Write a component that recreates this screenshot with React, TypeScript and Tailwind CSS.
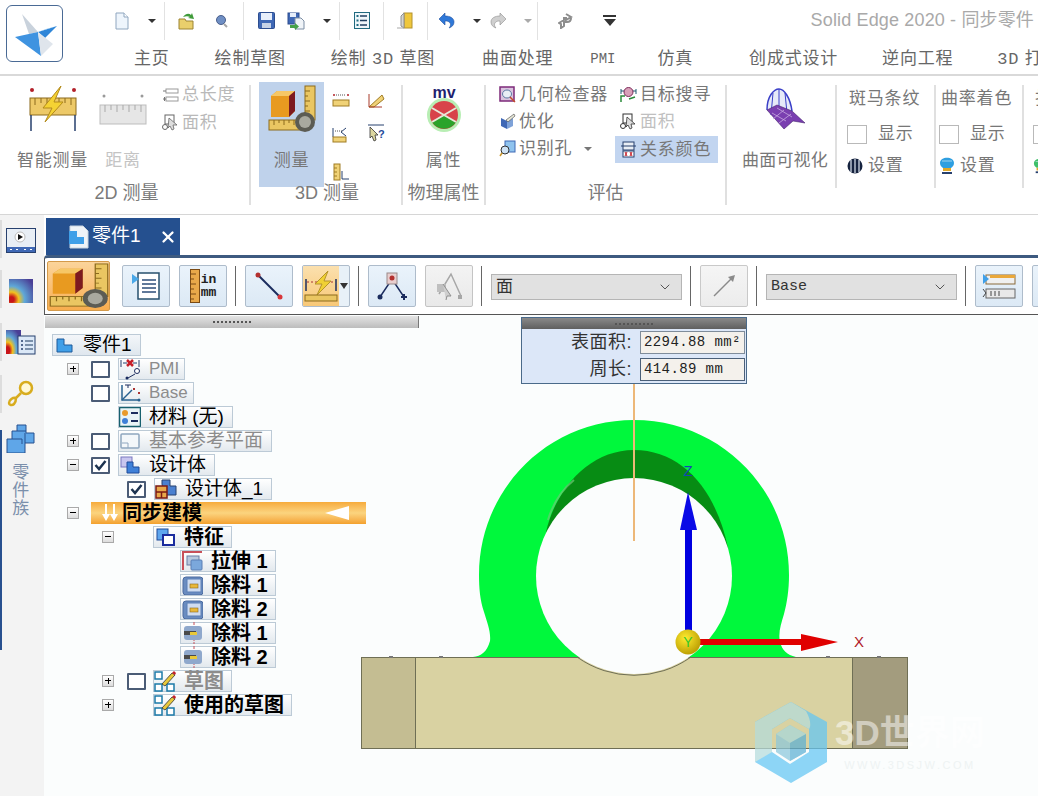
import { ChevronDown, X as Close } from 'lucide-react';
import type { ReactNode } from 'react';

const cjk = "font-['Liberation_Sans','Noto_Sans_CJK_SC',sans-serif]";
const mono = "font-['Liberation_Mono','Noto_Sans_CJK_SC',monospace]";

function Logo() {
  return (
    <div className="ml-[6px] mt-[5px] flex h-[57px] w-[57px] shrink-0 items-center justify-center rounded-[6px] border border-[#4a6a95] bg-white">
      <svg width="44" height="44" viewBox="0 0 44 44">
        <polygon points="9,2 25,20 16,22" fill="#c9d2dc" />
        <polygon points="25,20 44,14 32,26" fill="#2f86d8" />
        <polygon points="25,20 44,14 33,17" fill="#8fc3ee" />
        <polygon points="2,25 25,20 28,44" fill="#3f93e0" />
        <polygon points="25,20 40,32 28,44" fill="#dfe5ec" />
      </svg>
    </div>
  );
}

function Drop({ className = '' }: { className?: string }) {
  return <span className={`h-0 w-0 border-x-[4px] border-t-[4px] border-x-transparent border-t-[#333] ${className}`} />;
}

function QSep({ className = '' }: { className?: string }) {
  return <span className={`h-[38px] w-px bg-[#e2e2e2] ${className}`} />;
}

function QatDoc() {
  return (
    <svg width="14" height="18" viewBox="0 0 14 18">
      <path d="M1 1h8l4 4v12H1z" fill="#eef5fc" stroke="#8fa6bf" />
      <path d="M9 1v4h4" fill="#fff" stroke="#8fa6bf" />
    </svg>
  );
}
function QatOpen() {
  return (
    <svg width="19" height="18" viewBox="0 0 19 18">
      <path d="M1 7h6l1 2h7v8H1z" fill="#e9cf6c" stroke="#9c8433" />
      <path d="M5 5c3-4 6-4 8-2l1-2 2 6-6-1 2-1c-2-1-4-1-7 0z" fill="#3f9b3a" />
    </svg>
  );
}
function QatFind() {
  return (
    <svg width="14" height="14" viewBox="0 0 14 14">
      <circle cx="6" cy="6" r="4.5" fill="#6f8fc4" stroke="#4a5f8c" />
      <path d="M9 10l3 3" stroke="#a7a7a7" strokeWidth="2" />
    </svg>
  );
}
function QatSave() {
  return (
    <svg width="17" height="17" viewBox="0 0 17 17">
      <rect x="0.5" y="0.5" width="16" height="16" rx="1" fill="#3f68b5" stroke="#2c4d8f" />
      <rect x="3" y="1" width="11" height="7" fill="#e7eefa" />
      <rect x="4" y="11" width="9" height="5" fill="#c6d2e6" />
    </svg>
  );
}
function QatSaveAll() {
  return (
    <svg width="18" height="18" viewBox="0 0 18 18">
      <rect x="1" y="1" width="11" height="11" fill="#3f68b5" stroke="#2c4d8f" />
      <rect x="3" y="1" width="6" height="4" fill="#e7eefa" />
      <path d="M8 6h6l3 3v8H8z" fill="#f0f4f8" stroke="#7d8ea4" />
      <path d="M3 13h5v-2l4 3.500-4 3.500v-2H3z" fill="#46a14a" />
    </svg>
  );
}
function QatList() {
  return (
    <svg width="16" height="17" viewBox="0 0 16 17">
      <rect x="0.5" y="0.5" width="15" height="16" fill="#eef6fa" stroke="#1f6a80" />
      <path d="M6 4h7M6 8.500h7M6 13h7" stroke="#1f3f60" strokeWidth="1.500" />
      <path d="M2.500 4h2M2.500 8.500h2M2.500 13h2" stroke="#1f6a80" strokeWidth="2" />
    </svg>
  );
}
function QatDoor() {
  return (
    <svg width="16" height="17" viewBox="0 0 16 17">
      <rect x="7" y="1" width="8" height="15" fill="#efc73c" stroke="#b3922c" />
      <path d="M7 1L4 4v10l3 2z" fill="#d5d5d0" stroke="#8f8f8f" />
      <path d="M0 16h7" stroke="#a9a9a9" />
    </svg>
  );
}
function QatUndo({ color, stroke }: { color: string; stroke: string }) {
  return (
    <svg width="17" height="17" viewBox="0 0 17 17">
      <path d="M1 7l6-6v3c5 0 9 2 9 6 0 3-2 5-5 6 2-2 2-5 0-6-1-1-2-1-4-1v4z" fill={color} stroke={stroke} strokeWidth="0.600" />
    </svg>
  );
}
function QatSwap() {
  return (
    <svg width="15" height="16" viewBox="0 0 15 16">
      <path d="M8 1l5 3-5 3V5H6v2L1 10l2 1v4l3-2V9h3c3 0 4-2 4-4" fill="none" stroke="#8d8d8d" strokeWidth="2" />
    </svg>
  );
}

function QuickBar() {
  return (
    <div className="flex h-[41px] items-center">
      <span className="ml-[50px] flex w-[18px] justify-center"><QatDoc /></span>
      <Drop className="ml-[17px]" />
      <QSep className="ml-[8px]" />
      <span className="ml-[12px] flex w-[20px] justify-center"><QatOpen /></span>
      <span className="ml-[18px] flex w-[14px] justify-center"><QatFind /></span>
      <QSep className="ml-[14px]" />
      <span className="ml-[14px]"><QatSave /></span>
      <span className="ml-[12px]"><QatSaveAll /></span>
      <Drop className="ml-[18px]" />
      <QSep className="ml-[8px]" />
      <span className="ml-[14px]"><QatList /></span>
      <QSep className="ml-[13px]" />
      <span className="ml-[13px]"><QatDoor /></span>
      <QSep className="ml-[14px]" />
      <span className="ml-[10px]"><QatUndo color="#2f78d8" stroke="#1e4f9e" /></span>
      <Drop className="ml-[18px]" />
      <span className="ml-[9px] -scale-x-100"><QatUndo color="#cfcfcf" stroke="#8d8d8d" /></span>
      <Drop className="ml-[17px] border-t-[#aaa]" />
      <QSep className="ml-[5px]" />
      <span className="ml-[20px]"><QatSwap /></span>
      <span className="ml-[30px] flex flex-col items-center gap-[2px]">
        <span className="h-[2px] w-[13px] bg-[#333]" />
        <Drop className="border-x-[6px] border-t-[7px]" />
      </span>
      <span className={`ml-auto mr-[4px] text-[18px] tracking-[0.15px] text-[#a9a9a9] ${cjk}`}>Solid Edge 2020 - 同步零件</span>
    </div>
  );
}

function TabBar() {
  return (
    <div className={`flex h-[34px] items-center whitespace-nowrap pt-[2px] text-[17px] tracking-[0.8px] text-[#666] ${cjk}`}>
      <span className="ml-[71px]">主页</span>
      <span className="ml-[45px]">绘制草图</span>
      <span className="ml-[45px]">绘制 <span className={mono}>3D</span> 草图</span>
      <span className="ml-[47px]">曲面处理</span>
      <span className={`ml-[37px] w-[28px] text-[14px] tracking-normal ${mono}`}>PMI</span>
      <span className="ml-[42px]">仿真</span>
      <span className="ml-[56px]">创成式设计</span>
      <span className="ml-[44px]">逆向工程</span>
      <span className="ml-[44px]"><span className={mono}>3D</span> 打印</span>
    </div>
  );
}

function SmartMeasure() {
  return (
    <svg width="48" height="48" viewBox="0 0 48 48">
      <circle cx="3" cy="5" r="2" fill="#b3202a" />
      <circle cx="45" cy="5" r="2" fill="#b3202a" />
      <rect x="1" y="13" width="46" height="17" fill="#edc968" stroke="#8c6a1d" />
      <path d="M6 13v7M12 13v5M18 13v7M24 13v5M30 13v7M36 13v5M42 13v7" stroke="#8c6a1d" />
      <path d="M2 30v16M46 30v16" stroke="#27406e" strokeWidth="1.500" />
      <path d="M32 1L14 23h9l-7 14 18-20h-9z" fill="#f5d233" stroke="#b38a1a" />
    </svg>
  );
}
function GrayRuler() {
  return (
    <svg width="48" height="32" viewBox="0 0 48 32">
      <circle cx="5" cy="3" r="1.500" fill="#9a9a9a" />
      <circle cx="43" cy="3" r="1.500" fill="#9a9a9a" />
      <rect x="1" y="12" width="46" height="19" fill="#e6e6e6" stroke="#bdbdbd" />
      <path d="M6 12v7M12 12v5M18 12v7M24 12v5M30 12v7M36 12v5M42 12v7" stroke="#a9a9a9" />
    </svg>
  );
}
function MeasureSvgBody() {
  return (
    <>
      <rect x="37" y="1" width="10" height="34" fill="#eac662" stroke="#8c6a1d" />
      <path d="M37 6h5M37 11h3M37 16h5M37 21h3M37 26h5" stroke="#8c6a1d" />
      <rect x="1" y="35" width="38" height="10" fill="#eac662" stroke="#8c6a1d" />
      <path d="M6 35v5M11 35v3M16 35v5M21 35v3M26 35v5" stroke="#8c6a1d" />
      <polygon points="3,11 9,6 27,6 27,26 21,32 3,32" fill="#e89a20" />
      <polygon points="3,11 9,6 27,6 21,11" fill="#f6c766" />
      <polygon points="21,11 27,6 27,26 21,32" fill="#7d1a20" />
      <circle cx="37" cy="37" r="10" fill="#5c5c54" />
      <circle cx="37" cy="37" r="6" fill="#a9a99f" />
    </>
  );
}
function TinyLen({ gray = false }: { gray?: boolean }) {
  const c = gray ? '#9a9a9a' : '#c9a33c';
  return (
    <svg width="17" height="14" viewBox="0 0 17 14">
      <rect x="4" y="1" width="12" height="4" fill="none" stroke={c} />
      <rect x="4" y="9" width="12" height="4" fill="none" stroke={c} />
      <path d="M1 3h3M1 11h3M2.500 9v4" stroke="#777" />
    </svg>
  );
}
function AreaCursor({ gray = false }: { gray?: boolean }) {
  const c = gray ? '#666' : '#333';
  return (
    <svg width="17" height="17" viewBox="0 0 17 17">
      <circle cx="3" cy="13" r="2.500" fill="#fff" stroke={c} />
      <rect x="3" y="1" width="9" height="9" fill="#fff" stroke={c} />
      <path d="M7 4l8 7-4 0 1 4-2 1-2-4-2 2z" fill="#ddd" stroke={c} strokeWidth="0.800" />
    </svg>
  );
}
function MiniRuler({ kind }: { kind: number }) {
  if (kind === 0)
    return (
      <svg width="18" height="16" viewBox="0 0 18 16">
        <circle cx="2" cy="3" r="1" fill="#b3202a" /><circle cx="16" cy="3" r="1" fill="#b3202a" />
        <path d="M4 3h10" stroke="#555" strokeDasharray="1 1" />
        <rect x="1" y="8" width="16" height="6" fill="#f0d277" stroke="#a07c25" />
      </svg>
    );
  if (kind === 1)
    return (
      <svg width="18" height="18" viewBox="0 0 18 18">
        <path d="M2 16L15 4 17 8 7 16z" fill="#f0d277" stroke="#a07c25" />
        <path d="M2 3v13h13" fill="none" stroke="#a83a2a" />
      </svg>
    );
  if (kind === 2)
    return (
      <svg width="18" height="18" viewBox="0 0 18 18">
        <path d="M1 3v9M14 3L9 7l5 4" fill="none" stroke="#27406e" />
        <path d="M3 6h7" stroke="#555" strokeDasharray="1 1" />
        <rect x="1" y="12" width="13" height="5" fill="#f0d277" stroke="#a07c25" />
      </svg>
    );
  if (kind === 3)
    return (
      <svg width="18" height="18" viewBox="0 0 18 18">
        <path d="M1 1h16" stroke="#27406e" />
        <path d="M3 3l8 8-3 0 1 5-2 1-2-5-2 2z" fill="#ddd7a0" stroke="#333" strokeWidth="0.800" />
        <text x="11" y="14" fontSize="11" fontWeight="700" fill="#1f4a9a" fontFamily="Liberation Sans">?</text>
      </svg>
    );
  return (
    <svg width="18" height="18" viewBox="0 0 18 18">
      <rect x="2" y="1" width="6" height="16" fill="#f0d277" stroke="#a07c25" />
      <path d="M2 5h3M2 9h3M2 13h3" stroke="#a07c25" />
      <path d="M10 8v8h7" fill="none" stroke="#27406e" />
    </svg>
  );
}
function MvIcon() {
  return (
    <svg width="36" height="46" viewBox="0 0 36 46">
      <text x="18" y="12" textAnchor="middle" fontSize="16" fontWeight="700" fill="#1f1f6e" fontFamily="Liberation Sans">mv</text>
      <circle cx="18" cy="29" r="17" fill="#b8eeb4" />
      <circle cx="18" cy="29" r="14" fill="#d8434a" />
      <path d="M6 36a14 14 0 0 0 24 0L18 29z" fill="#2aa32a" />
      <path d="M6 22l24 14M30 22L6 36" stroke="#e7e7d8" strokeWidth="2" />
    </svg>
  );
}
function GeoCheck() {
  return (
    <svg width="17" height="17" viewBox="0 0 17 17">
      <rect x="1" y="1" width="14" height="14" fill="#d9c4de" stroke="#7d2a7a" strokeWidth="1.500" />
      <ellipse cx="8" cy="8" rx="4.500" ry="4" fill="#e8eef5" stroke="#5c7ba5" />
      <path d="M11 11l5 5" stroke="#c64a2a" strokeWidth="1.500" />
    </svg>
  );
}
function Optimize() {
  return (
    <svg width="17" height="17" viewBox="0 0 17 17">
      <path d="M2 5l6 3v8l-6-3z" fill="#3f68b5" /><path d="M8 8l6-3v8l-6 3z" fill="#7ea2d8" />
      <path d="M7 7l8-6 1 2-7 6z" fill="#e7e7d8" stroke="#444" strokeWidth="0.600" />
    </svg>
  );
}
function HoleId() {
  return (
    <svg width="17" height="17" viewBox="0 0 17 17">
      <rect x="6" y="1" width="10" height="11" fill="#8fc3ee" stroke="#3f68b5" />
      <circle cx="6" cy="10" r="4" fill="#cfe3f6" stroke="#333" />
      <path d="M3 13l-2 3" stroke="#c9962a" strokeWidth="1.500" />
    </svg>
  );
}
function TargetSearch() {
  return (
    <svg width="17" height="17" viewBox="0 0 17 17">
      <path d="M1 3v5M16 3v5M1 5h15" stroke="#1f5a70" />
      <circle cx="8.500" cy="6" r="4.500" fill="#d8a0b8" stroke="#7d2a5a" />
      <path d="M1 16V10h4M9 13l6-2" stroke="#2a8a3a" strokeWidth="1.500" fill="none" />
    </svg>
  );
}
function RelColor() {
  return (
    <svg width="17" height="17" viewBox="0 0 17 17">
      <rect x="3" y="1" width="11" height="8" fill="#e9eef5" stroke="#27406e" />
      <path d="M1 5h15" stroke="#27406e" />
      <rect x="3" y="10" width="11" height="6" fill="#fff" stroke="#27406e" />
      <path d="M5 11l2 4M7 11l-2 4M10 11l2 4M12 11l-2 4" stroke="#c4202a" />
    </svg>
  );
}
function SurfaceVis() {
  return (
    <svg width="42" height="42" viewBox="0 0 42 42">
      <path d="M3 22C3 8 10 1 15 1s11 8 13 22" fill="#e6eaf8" stroke="#3a3fc8" strokeWidth="1.500" />
      <path d="M15 1v24M9 5l-2 22M21 5l2 20" stroke="#3a3fc8" />
      <path d="M3 22l10-5 15 6 13 12-12-2-9 8z" fill="#7a3fb0" stroke="#45206e" strokeWidth="0.600" />
      <path d="M8 25l14 8M13 20l15 9M9 31l11-9M15 35l12-9" stroke="#c6a8e0" strokeWidth="0.800" />
    </svg>
  );
}
function Zebra() {
  return (
    <svg width="16" height="16" viewBox="0 0 16 16">
      <circle cx="8" cy="8" r="7.500" fill="#16233f" />
      <path d="M4 2v12M8 1v14M12 2v12" stroke="#dfe8f2" strokeWidth="1.200" />
    </svg>
  );
}
function Curv({ color = '#2f9fe0' }: { color?: string }) {
  return (
    <svg width="16" height="18" viewBox="0 0 16 18">
      <path d="M1 6c0-7 14-7 14 0 0 3-2 4-3 5H4C3 10 1 9 1 6z" fill={color} />
      <path d="M3 4h10" stroke="#cfeaf8" opacity="0.700" />
      <rect x="4" y="11" width="8" height="3" fill="#e0a82a" />
      <rect x="3" y="15" width="10" height="2" fill="#27406e" />
    </svg>
  );
}

function GroupLabel({ children }: { children: ReactNode }) {
  return <div className="flex h-[24px] items-center justify-center text-[18px] text-[#7a7a7a]">{children}</div>;
}
function Sep({ className = 'h-[120px]' }: { className?: string }) {
  return <div className={`mt-[3px] w-[2px] shrink-0 bg-[#e0e0e0] ${className}`} />;
}
function SmallRow({ icon, label, className = '' }: { icon: ReactNode; label: string; className?: string }) {
  return (
    <div className={`flex h-[25px] items-center gap-[3px] whitespace-nowrap tracking-[0.8px] ${className}`}>
      <span className="flex w-[17px] justify-center">{icon}</span>
      {label}
    </div>
  );
}
function Check({ className = '' }: { className?: string }) {
  return <span className={`block h-[19px] w-[20px] border border-[#b9b9b9] bg-white ${className}`} />;
}

function ViewGroup({ title, icon, className }: { title: string; icon: ReactNode; className: string }) {
  return (
    <div className={`flex shrink-0 flex-col tracking-[0.8px] ${className}`}>
      <div className="flex h-[34px] items-center pl-[2px]">{title}</div>
      <div className="mt-[8px] flex h-[20px] items-center">
        <Check />
        <span className="ml-[11px]">显示</span>
      </div>
      <div className="mt-[11px] flex h-[22px] items-center gap-[5px]">
        {icon}
        设置
      </div>
    </div>
  );
}

function Ribbon() {
  return (
    <div className={`flex h-[141px] shrink-0 items-start overflow-hidden border-b border-t-2 border-b-[#d6d6d6] border-t-[#d9d9d9] pt-[6px] text-[17px] text-[#777] ${cjk}`}>
      <div className="w-[249px] shrink-0">
        <div className="flex h-[99px]">
          <div className="ml-[17px] flex w-[71px] flex-col items-center">
            <div className="mt-[3px] h-[48px]"><SmartMeasure /></div>
            <div className="mt-[15px] h-[24px] whitespace-nowrap tracking-[0.8px]">智能测量</div>
          </div>
          <div className="ml-[12px] flex w-[46px] flex-col items-center">
            <div className="mt-[11px] h-[40px]"><GrayRuler /></div>
            <div className="mt-[15px] h-[24px] tracking-[0.8px] text-[#c4c4c4]">距离</div>
          </div>
          <div className="ml-[16px] flex flex-col gap-[3px] text-[#b9b9b9]">
            <SmallRow icon={<TinyLen gray />} label="总长度" />
            <SmallRow icon={<AreaCursor gray />} label="面积" />
          </div>
        </div>
        <GroupLabel><span className="ml-[4px]">2D 测量</span></GroupLabel>
      </div>
      <Sep />
      <div className="w-[150px] shrink-0">
        <div className="flex h-[99px]">
          <div className="ml-[8px] flex h-[105px] w-[65px] shrink-0 flex-col items-center bg-[#bfd2eb]">
            <div className="mt-[3px] h-[48px]">
              <svg width="48" height="48" viewBox="0 0 48 48"><MeasureSvgBody /></svg>
            </div>
            <div className="mt-[15px] tracking-[0.8px]">测量</div>
          </div>
          <div className="ml-[8px] flex w-[18px] flex-col">
            <div className="mt-[10px]"><MiniRuler kind={0} /></div>
            <div className="mt-[17px]"><MiniRuler kind={2} /></div>
            <div className="mt-[20px]"><MiniRuler kind={4} /></div>
          </div>
          <div className="ml-[17px] flex w-[18px] flex-col">
            <div className="mt-[9px]"><MiniRuler kind={1} /></div>
            <div className="mt-[15px]"><MiniRuler kind={3} /></div>
          </div>
        </div>
        <GroupLabel><span className="ml-[2px]">3D 测量</span></GroupLabel>
      </div>
      <Sep />
      <div className="w-[81px] shrink-0">
        <div className="flex h-[99px] flex-col items-center">
          <div className="mt-[4px] h-[47px]"><MvIcon /></div>
          <div className="mt-[15px] tracking-[0.8px]">属性</div>
        </div>
        <GroupLabel>物理属性</GroupLabel>
      </div>
      <Sep />
      <div className="w-[239px] shrink-0">
        <div className="flex h-[99px] pl-[13px]">
          <div className="flex flex-col gap-[2px]">
            <SmallRow icon={<GeoCheck />} label="几何检查器" />
            <SmallRow icon={<Optimize />} label="优化" />
            <div className="flex items-center">
              <SmallRow icon={<HoleId />} label="识别孔" />
              <Drop className="ml-[12px] border-t-[#777]" />
            </div>
          </div>
          <div className="ml-[12px] flex flex-col gap-[2px]">
            <SmallRow icon={<TargetSearch />} label="目标搜寻" />
            <SmallRow icon={<AreaCursor />} label="面积" className="text-[#c0c0c0]" />
            <SmallRow icon={<RelColor />} label="关系颜色" className="-ml-[5px] h-[27px] w-[103px] bg-[#c2d5f0] pl-[5px]" />
          </div>
        </div>
        <GroupLabel>评估</GroupLabel>
      </div>
      <Sep />
      <div className="flex w-[108px] shrink-0 flex-col items-center pl-[8px]">
        <div className="mt-[6px] h-[42px]"><SurfaceVis /></div>
        <div className="mt-[18px] whitespace-nowrap tracking-[0.2px]">曲面可视化</div>
      </div>
      <Sep className="h-[103px]" />
      <ViewGroup title="斑马条纹" icon={<Zebra />} className="w-[97px] pl-[10px]" />
      <Sep className="h-[103px]" />
      <ViewGroup title="曲率着色" icon={<Curv />} className="w-[86px] pl-[3px]" />
      <Sep className="h-[103px]" />
      <ViewGroup title="扫描" icon={<Curv color="#3fc06a" />} className="w-[60px] pl-[9px]" />
    </div>
  );
}

function RailFilm() {
  return (
    <svg width="30" height="25" viewBox="0 0 30 25">
      <rect x="0.500" y="0.500" width="29" height="24" fill="#e8eef5" stroke="#27406e" />
      <rect x="1" y="19" width="28" height="5" fill="#3f68b5" />
      <path d="M4 21.500h2M10 21.500h2M18 21.500h2M24 21.500h2" stroke="#fff" />
      <circle cx="14" cy="9" r="5" fill="#fff" stroke="#bbb" />
      <path d="M12 6l5 3-5 3z" fill="#111" />
    </svg>
  );
}
function RailHeat() {
  return (
    <svg width="24" height="24" viewBox="0 0 24 24">
      <defs>
        <radialGradient id="heat" cx="0.100" cy="0.850" r="1.100">
          <stop offset="0.100" stopColor="#c8141a" />
          <stop offset="0.280" stopColor="#f2c21e" />
          <stop offset="0.500" stopColor="#5fa8d8" />
          <stop offset="1" stopColor="#4a3f96" />
        </radialGradient>
      </defs>
      <rect width="24" height="24" fill="url(#heat)" />
    </svg>
  );
}
function RailHeatList() {
  return (
    <svg width="30" height="25" viewBox="0 0 30 25">
      <defs>
        <radialGradient id="heat2" cx="0.100" cy="0.850" r="1">
          <stop offset="0.150" stopColor="#c8141a" />
          <stop offset="0.350" stopColor="#f2c21e" />
          <stop offset="0.600" stopColor="#5fa8d8" />
          <stop offset="1" stopColor="#4a3f96" />
        </radialGradient>
      </defs>
      <rect width="15" height="24" fill="url(#heat2)" />
      <rect x="12" y="6" width="17" height="18" fill="#dbe8f7" stroke="#27406e" />
      <path d="M15 11h2M15 15h2M15 19h2" stroke="#27406e" strokeWidth="1.500" />
      <path d="M19 11h8M19 15h8M19 19h8" stroke="#5b7391" strokeWidth="1.500" />
    </svg>
  );
}
function RailKey() {
  return (
    <svg width="28" height="27" viewBox="0 0 28 27">
      <circle cx="19" cy="8" r="6" fill="#fff8d8" stroke="#d8ac1e" strokeWidth="2.500" />
      <path d="M14 13L9 18c-3-1-7 2-7 5 0 2 3 3 5 1 2-2 2-4 2-6" fill="none" stroke="#d8ac1e" strokeWidth="2.500" />
    </svg>
  );
}
function RailFamily() {
  return (
    <svg width="29" height="29" viewBox="0 0 29 29">
      <path d="M11 1h9v8h8v10h-9v10H1V15h5V7h5z" fill="#5fa6e8" stroke="#27508f" />
      <path d="M11 7h9M6 15h10v5M19 9v10" stroke="#27508f" fill="none" />
    </svg>
  );
}

function LeftRail() {
  return (
    <div className="relative flex w-[44px] shrink-0 flex-col items-center bg-[#f3f3f3] pr-[3px]">
      <div className="absolute left-0 top-[215px] h-[220px] w-[2px] bg-[#27508f]" />
      <div className="absolute left-0 top-[5px] h-[38px] w-[2px] bg-[#dddddd]" />
      <div className="absolute left-0 top-[55px] h-[38px] w-[2px] bg-[#dddddd]" />
      <div className="absolute left-0 top-[108px] h-[38px] w-[2px] bg-[#dddddd]" />
      <div className="absolute left-0 top-[160px] h-[38px] w-[2px] bg-[#dddddd]" />
      <div className="mt-[13px]"><RailFilm /></div>
      <div className="mt-[26px]"><RailHeat /></div>
      <div className="mt-[27px]"><RailHeatList /></div>
      <div className="mt-[25px]"><RailKey /></div>
      <div className="mt-[17px]"><RailFamily /></div>
      <div className={`mr-[4px] mt-[10px] text-[17px] tracking-[1px] text-[#7b8fab] [writing-mode:vertical-rl] ${cjk}`}>零件族</div>
    </div>
  );
}

function TbButton({ children, className = 'bg-gradient-to-b from-[#eaf3fb] to-[#dce9f5] border-[#aebccb]' }: { children: ReactNode; className?: string }) {
  return <div className={`flex h-[42px] w-[48px] shrink-0 items-center justify-center rounded-[2px] border ${className}`}>{children}</div>;
}
function TbSep() {
  return <span className="block h-[40px] w-px shrink-0 bg-[#666]" />;
}
function Combo({ label, className = '' }: { label: string; className?: string }) {
  return (
    <div className={`mt-[2px] flex h-[26px] w-[191px] shrink-0 items-center justify-between border border-[#b5b5b5] bg-[#e1e1e1] pl-[4px] pr-[8px] text-[#333] ${className}`}>
      {label}
      <ChevronDown className="h-[16px] w-[16px] text-[#555]" strokeWidth={1.5} />
    </div>
  );
}

function Toolbar() {
  return (
    <div className={`flex h-[60px] shrink-0 items-center overflow-hidden rounded-tl-[4px] border-b border-l border-t-[3px] border-b-[#555] border-l-[#555] border-t-[#3d5a80] bg-white ${cjk}`}>
      <div className="ml-[2px] flex h-[50px] w-[63px] shrink-0 items-center justify-center rounded-[2px] border border-[#d49a4a] bg-gradient-to-b from-[#fbd49a] to-[#f8ad4e]">
        <svg width="60" height="46" viewBox="0 0 48 48" preserveAspectRatio="none"><MeasureSvgBody /></svg>
      </div>
      <div className="ml-[12px]">
        <TbButton>
          <svg width="30" height="30" viewBox="0 0 30 30">
            <rect x="7" y="2" width="21" height="26" fill="#fff" stroke="#27506e" strokeWidth="1.500" />
            <path d="M1 3l7 5-7 5z" fill="#4aa8e8" />
            <path d="M11 9h14M11 13h14M11 17h14M11 21h14" stroke="#2c4d7a" strokeWidth="1.500" />
          </svg>
        </TbButton>
      </div>
      <div className="ml-[9px]">
        <TbButton>
          <svg width="10" height="34" viewBox="0 0 10 34">
            <rect x="0.500" y="0.500" width="9" height="33" fill="#e8a84a" stroke="#7a4a14" />
            <path d="M1 5h5M1 10h3M1 15h5M1 20h3M1 25h5M1 30h3" stroke="#7a4a14" />
          </svg>
          <div className={`ml-[1px] text-[13px] font-bold leading-[13px] text-[#222] ${mono}`}>in<br />mm</div>
        </TbButton>
      </div>
      <div className="ml-[8px]"><TbSep /></div>
      <div className="ml-[9px]">
        <TbButton>
          <svg width="30" height="30" viewBox="0 0 30 30">
            <path d="M4 4l22 22" stroke="#1b2c5e" strokeWidth="2" />
            <circle cx="4" cy="4" r="2.500" fill="#b3302f" />
            <circle cx="26" cy="26" r="2.500" fill="#d8363a" />
          </svg>
        </TbButton>
      </div>
      <div className="ml-[9px]">
        <div className="flex h-[42px] w-[48px] shrink-0 items-center overflow-hidden rounded-[2px] border border-[#aebccb] bg-[#e8f1f8]">
          <div className="flex h-full w-[36px] items-center justify-center bg-gradient-to-b from-[#fbe0ae] to-[#f8c876]">
            <svg width="34" height="34" viewBox="0 0 34 34">
              <path d="M2 10v12M32 10v12" stroke="#1b2c5e" strokeWidth="1.500" />
              <path d="M3 13h28" stroke="#a33" strokeDasharray="2 2" />
              <path d="M24 2L11 15h7l-5 11 14-14h-7z" fill="#f0d034" stroke="#b5942a" />
              <rect x="1" y="26" width="32" height="6" fill="#eac662" stroke="#8c6a1d" />
            </svg>
          </div>
          <Drop className="ml-[1px] border-x-[4.500px] border-t-[6px] border-t-[#111]" />
        </div>
      </div>
      <div className="ml-[8px]"><TbSep /></div>
      <div className="ml-[9px]">
        <TbButton>
          <svg width="30" height="30" viewBox="0 0 30 30">
            <path d="M3 26L15 8l12 18" fill="none" stroke="#1b2c5e" strokeWidth="1.500" />
            <rect x="10" y="2" width="10" height="11" fill="#e9cfcf" stroke="#9a8a8a" />
            <circle cx="15" cy="7" r="2.500" fill="#b3302f" />
            <circle cx="3" cy="26" r="2.500" fill="#1b2c5e" />
            <path d="M24 26h6M27 23v6" stroke="#1b2c5e" strokeWidth="2" />
          </svg>
        </TbButton>
      </div>
      <div className="ml-[9px]">
        <TbButton className="border-[#c4c4c4] bg-gradient-to-b from-[#f3f3f3] to-[#e9e9e9]">
          <svg width="32" height="32" viewBox="0 0 32 32">
            <path d="M6 24L18 4l10 22" fill="none" stroke="#a7a7a7" strokeWidth="1.500" />
            <rect x="4" y="14" width="9" height="8" fill="#bfbfbf" />
            <path d="M10 14l8 12-4 0-1 4" fill="#cfcfcf" stroke="#8f8f8f" />
            <rect x="25" y="25" width="4" height="4" fill="#a7a7a7" />
          </svg>
        </TbButton>
      </div>
      <div className="ml-[8px]"><TbSep /></div>
      <Combo label="面" className="ml-[9px] text-[17px]" />
      <div className="ml-[8px]"><TbSep /></div>
      <div className="ml-[9px]">
        <TbButton className="border-[#c9c9c9] bg-gradient-to-b from-[#f5f5f5] to-[#ececec]">
          <svg width="26" height="26" viewBox="0 0 26 26">
            <path d="M3 23L21 5" stroke="#8a8a8a" strokeWidth="1.500" />
            <path d="M24 2l-7 2 5 5z" fill="#8a8a8a" />
          </svg>
        </TbButton>
      </div>
      <div className="ml-[8px]"><TbSep /></div>
      <Combo label="Base" className={`ml-[9px] text-[15px] ${mono}`} />
      <div className="ml-[8px]"><TbSep /></div>
      <div className="ml-[9px]">
        <TbButton>
          <svg width="34" height="28" viewBox="0 0 34 28">
            <rect x="4" y="3" width="29" height="9" fill="#f0f0f0" stroke="#8a6a3a" />
            <rect x="8" y="3" width="25" height="3" fill="#eaa83a" />
            <path d="M1 2l6 5-6 5z" fill="#3f9fe8" />
            <rect x="4" y="17" width="29" height="9" fill="#e9e9e9" stroke="#666" />
            <path d="M1 17l3 4-3 4M9 19v5M13 19v5M17 19v5" fill="none" stroke="#444" />
          </svg>
        </TbButton>
      </div>
      <div className="ml-[9px]">
        <TbButton><span /></TbButton>
      </div>
    </div>
  );
}

function Grip() {
  return <span className="h-[2px] w-[38px] bg-[repeating-linear-gradient(90deg,#555_0,#555_2px,transparent_2px,transparent_4px)]" />;
}

function Exp({ open = false, className = '' }: { open?: boolean; className?: string }) {
  return (
    <span className={`relative block h-[12px] w-[12px] shrink-0 border border-[#a9a9a9] bg-gradient-to-b from-white to-[#dcdcdc] ${className}`}>
      <span className="absolute left-[2px] top-[4px] h-px w-[6px] bg-black" />
      {!open && <span className="absolute left-[4.500px] top-[2px] h-[6px] w-px bg-black" />}
    </span>
  );
}
function Chk({ on = false, className = '' }: { on?: boolean; className?: string }) {
  return (
    <span className={`flex h-[17px] w-[19px] shrink-0 items-center justify-center rounded-[1px] border-2 border-[#4b5c76] bg-white ${className}`}>
      {on && (
        <svg width="13" height="11" viewBox="0 0 13 11"><path d="M1.500 5l3.500 4 6.500-8" fill="none" stroke="#1d3350" strokeWidth="2.500" /></svg>
      )}
    </span>
  );
}
function Node({ icon, label, gray = false, bold = false, latin = false, className = '' }: { icon: ReactNode; label: string; gray?: boolean; bold?: boolean; latin?: boolean; className?: string }) {
  return (
    <span className={`flex h-[22px] shrink-0 items-center gap-[8px] whitespace-nowrap border border-[#bccad6] bg-gradient-to-b from-white to-[#e3e9ee] ${latin ? 'pr-[5px] text-[17px]' : bold ? 'pr-[7px] text-[20px] font-bold' : 'pr-[8px] text-[19px]'} ${gray ? 'text-[#8c8c8c]' : 'text-black'} ${className}`}>
      <span className="flex w-[22px] justify-center">{icon}</span>
      {label}
    </span>
  );
}

function IPart() {
  return <svg width="17" height="15" viewBox="0 0 17 15"><path d="M1 1h7v6h8v7H1z" fill="#3f9fe8" stroke="#1f5a9a" /></svg>;
}
function IPmi() {
  return (
    <svg width="21" height="21" viewBox="0 0 21 21">
      <path d="M1 1v7M19 1v7M3 4h4M13 4h4" stroke="#27406e" />
      <path d="M7 1l6 6M13 1L7 7" stroke="#c4202a" strokeWidth="2.500" />
      <circle cx="17" cy="12" r="2.500" fill="#fff" stroke="#1b2c5e" />
      <path d="M15 15l-7 4" stroke="#1b2c5e" />
      <circle cx="7" cy="19" r="1.500" fill="#1b2c5e" />
    </svg>
  );
}
function IBase() {
  return (
    <svg width="22" height="20" viewBox="0 0 22 20">
      <path d="M3 2v15h17" fill="none" stroke="#27608f" strokeWidth="1.500" />
      <path d="M3 17L13 7" stroke="#27608f" strokeWidth="1.500" />
      <path d="M6 2h6M9 2v3" stroke="#1b2c5e" />
      <path d="M14 5l2 2M16 5l-2 2M19 9l2 2M21 9l-2 2" stroke="#a33" />
      <circle cx="20" cy="17" r="1.500" fill="#27608f" />
    </svg>
  );
}
function IMat() {
  return (
    <svg width="22" height="20" viewBox="0 0 22 20">
      <rect x="0.500" y="0.500" width="21" height="19" rx="1" fill="#e9f3f6" stroke="#17606e" strokeWidth="1.500" />
      <circle cx="6" cy="6" r="3" fill="#e89a2c" />
      <circle cx="6" cy="14" r="3" fill="#3f7fd8" />
      <path d="M12 6h7M12 14h7" stroke="#1b2c5e" strokeWidth="2" />
    </svg>
  );
}
function IPlane() {
  return <svg width="20" height="16" viewBox="0 0 20 16"><rect x="1" y="1" width="18" height="14" rx="1" fill="#f3f7fa" stroke="#8fa6bf" strokeWidth="1.500" /><path d="M2 10h6v5" fill="none" stroke="#8fa6bf" /></svg>;
}
function IBody() {
  return <svg width="20" height="18" viewBox="0 0 20 18"><rect x="1" y="1" width="11" height="10" fill="#c9c6ef" stroke="#7a78bf" /><path d="M7 6h6v5h6v6H7z" fill="#3f80d8" stroke="#1f4a9a" /></svg>;
}
function IBody1() {
  return (
    <svg width="22" height="20" viewBox="0 0 22 20">
      <path d="M7 5V1h8v6h6v9H9z" fill="#4a80d0" stroke="#27406e" />
      <rect x="1" y="7" width="11" height="12" fill="#e8a84a" stroke="#7a1a14" strokeWidth="1.500" />
      <path d="M1 13h11M6.500 13v6" stroke="#7a1a14" strokeWidth="1.500" />
    </svg>
  );
}
function IFeature() {
  return <svg width="19" height="18" viewBox="0 0 19 18"><rect x="1" y="1" width="11" height="11" fill="#5ea6ee" stroke="#1f4a9a" /><path d="M7 7h11v10H7z" fill="#fff" stroke="#1b2c9e" strokeWidth="2" /></svg>;
}
function IExtrude() {
  return <svg width="21" height="20" viewBox="0 0 21 20"><path d="M1 19V1h19" fill="none" stroke="#c8505a" strokeWidth="2" /><rect x="5" y="5" width="12" height="9" fill="#b8c8de" stroke="#6a7fa5" /><rect x="9" y="9" width="11" height="10" rx="1" fill="#7ba8dc" stroke="#5a7fb5" /></svg>;
}
function ICut() {
  return <svg width="21" height="19" viewBox="0 0 21 19"><rect x="1" y="1" width="20" height="18" rx="3" fill="#6a8cc0" stroke="#4a6a9f" /><rect x="5" y="3" width="14" height="13" fill="#cfdcf0" stroke="#5a7fb5" /><rect x="8" y="8" width="8" height="4" fill="#e8b83a" stroke="#8c6a1d" strokeWidth="0.600" /></svg>;
}
function IHole() {
  return <svg width="21" height="22" viewBox="0 0 21 22"><path d="M12 0v22" stroke="#c8505a" strokeDasharray="3 1" /><rect x="2" y="4" width="18" height="14" rx="3" fill="#8fa8cc" /><rect x="2" y="9" width="12" height="4" fill="#4a4a4a" /><rect x="8" y="10" width="7" height="3" fill="#e8c83a" /></svg>;
}
function ISketch() {
  return (
    <svg width="22" height="21" viewBox="0 0 22 21">
      <rect x="1" y="1" width="7" height="7" fill="#fff" stroke="#1b7aa8" strokeWidth="1.500" />
      <rect x="1" y="13" width="7" height="7" fill="#fff" stroke="#1b7aa8" strokeWidth="1.500" />
      <rect x="13" y="13" width="7" height="7" fill="#fff" stroke="#1b7aa8" strokeWidth="1.500" />
      <path d="M8 13L18 2l3 2-10 11z" fill="#e8c83a" stroke="#333" strokeWidth="0.800" />
      <path d="M18 2l3 2 1-2-2-2z" fill="#c4202a" />
    </svg>
  );
}

function Row({ children }: { children: ReactNode }) {
  return <div className="flex h-[24px] items-center">{children}</div>;
}

function Tree() {
  return (
    <div className={`relative mt-[5px] flex flex-col ${cjk}`}>
      <Row><Node icon={<IPart />} label="零件1" className="ml-[8px] gap-[6px] !from-[#f3f6f9] !to-[#dfe7ee]" /></Row>
      <Row><Exp className="ml-[23px]" /><Chk className="ml-[12px]" /><Node icon={<IPmi />} label="PMI" gray latin className="ml-[8px]" /></Row>
      <Row><Chk className="ml-[47px]" /><Node icon={<IBase />} label="Base" gray latin className="ml-[8px]" /></Row>
      <Row><Node icon={<IMat />} label="材料 (无)" className="ml-[74px]" /></Row>
      <Row><Exp className="ml-[23px]" /><Chk className="ml-[12px]" /><Node icon={<IPlane />} label="基本参考平面" gray className="ml-[8px]" /></Row>
      <Row><Exp open className="ml-[23px]" /><Chk on className="ml-[12px]" /><Node icon={<IBody />} label="设计体" className="ml-[8px]" /></Row>
      <Row><Chk on className="ml-[83px]" /><Node icon={<IBody1 />} label="设计体_1" className="ml-[8px]" /></Row>
      <Row>
        <Exp open className="ml-[23px]" />
        <div className="ml-[12px] flex h-[22px] w-[275px] items-center bg-gradient-to-b from-[#f6ab3a] via-[#fbd47e] to-[#f3a12c] pl-[9px] text-[20px] font-bold text-black">
          <svg width="20" height="18" viewBox="0 0 20 18">
            <path d="M5 0h2v10h3l-4 7-4-7h3zM13 0h2v10h3l-4 7-4-7h3z" fill="#fff" />
          </svg>
          <span className="ml-[2px]">同步建模</span>
          <span className="ml-auto mr-[17px] h-0 w-0 border-y-[7px] border-r-[24px] border-y-transparent border-r-white" />
        </div>
      </Row>
      <Row><Exp open className="ml-[58px]" /><Node icon={<IFeature />} label="特征" bold className="ml-[39px]" /></Row>
      <Row><Node icon={<IExtrude />} label="拉伸 1" bold className="ml-[136px] gap-[6px]" /></Row>
      <Row><Node icon={<ICut />} label="除料 1" bold className="ml-[136px] gap-[6px]" /></Row>
      <Row><Node icon={<ICut />} label="除料 2" bold className="ml-[136px] gap-[6px]" /></Row>
      <Row><Node icon={<IHole />} label="除料 1" bold className="ml-[136px] gap-[6px]" /></Row>
      <Row><Node icon={<IHole />} label="除料 2" bold className="ml-[136px] gap-[6px]" /></Row>
      <Row><Exp className="ml-[58px]" /><Chk className="ml-[13px]" /><Node icon={<ISketch />} label="草图" gray bold className="ml-[7px]" /></Row>
      <Row><Exp className="ml-[58px]" /><Node icon={<ISketch />} label="使用的草图" bold className="ml-[39px]" /></Row>
    </div>
  );
}

function Model() {
  return (
    <svg className="absolute left-0 top-0" width="994" height="481" viewBox="44 315 994 481">
      <path
        d="M473 657C481 656 487 652 490 641C491 632 487 622 484 612C480 600 479 588 479 575C479 489 548 420 634 420C720 420 789 489 789 575C789 590 787 603 784 614C781 624 778 633 780 642C782 650 787 655 796 657Z"
        fill="#00f83c"
      />
      <path d="M546 532C556 488 590 450 634 450C682 450 716 490 728 548L634 600Z" fill="#078c14" />
      <path d="M548 520C554 500 564 488 574 480" fill="none" stroke="#6fc878" strokeWidth="2" opacity="0.700" />
      <rect x="361.500" y="657.500" width="546" height="91" fill="#d9d2a2" stroke="#6f6f55" />
      <rect x="361.500" y="657.500" width="54" height="91" fill="#c4bd92" stroke="#6f6f55" />
      <rect x="852.500" y="657.500" width="55" height="91" fill="#a39c7e" stroke="#6f6f55" />
      <path d="M389 657h4M439 657h4M826 657h4M877 657h4" stroke="#777" strokeWidth="2" />
      <circle cx="634" cy="576" r="98" fill="#fbfdfd" />
      <path d="M577 657A98 98 0 0 0 691 657" fill="none" stroke="#6f6f55" />
      <path d="M634 384V541" stroke="#edb878" strokeWidth="2" />
      <rect x="685" y="528" width="7" height="106" fill="#0000e0" />
      <polygon points="688,492 680,530 697,530" fill="#0a0ae6" />
      <text x="688" y="476" textAnchor="middle" fontSize="15" fill="#1544b8" fontFamily="Liberation Sans">Z</text>
      <rect x="698" y="639" width="104" height="6" fill="#e00000" />
      <polygon points="801,634 838,642 801,651" fill="#e00000" />
      <text x="859" y="647" textAnchor="middle" fontSize="15" fill="#b01a28" fontFamily="Liberation Sans">X</text>
      <defs>
        <radialGradient id="ball" cx="0.400" cy="0.350" r="0.700">
          <stop offset="0" stopColor="#ffec30" />
          <stop offset="1" stopColor="#b89a00" />
        </radialGradient>
      </defs>
      <circle cx="688" cy="642" r="12.500" fill="url(#ball)" />
      <text x="688" y="647" textAnchor="middle" fontSize="14" fill="#35c92a" fontFamily="Liberation Sans">Y</text>
      <g opacity="0.720">
        <path
          fillRule="evenodd"
          d="M791 702L827 722V762L791 783L755 762V722ZM790 718L772 729V752L790 764L809 752V729Z"
          fill="#63c6f4"
        />
        <path d="M755 722L791 702L806 711C811 720 811 726 809 729L790 718L772 729V752L755 762Z" fill="#b5dcdc" />
        <path d="M776 734L790 725L806 734V752L790 761L776 752Z" fill="#8cc8dc" />
        <path d="M776 734L790 743L806 734L790 725Z" fill="#a8d8dc" />
        <path d="M790 743V761L806 752V734Z" fill="#5cb0d4" />
      </g>
    </svg>
  );
}

function MeasurePopup() {
  return (
    <div className={`absolute left-[477px] top-[2px] flex h-[67px] w-[226px] flex-col border border-[#4a6a8a] bg-[#dce7f8] text-[18px] text-[#333] ${cjk}`}>
      <div className="flex h-[11px] items-center justify-center bg-gradient-to-b from-[#8a8a8a] to-[#5f5f5f]">
        <Grip />
      </div>
      <div className="flex h-[27px] items-center justify-end pr-[1px]">
        <span className="tracking-[0.5px]">表面积:</span>
        <span className={`ml-[8px] flex h-[23px] w-[105px] items-center overflow-hidden whitespace-nowrap border border-[#7f8c9a] bg-[#f4f1ec] pl-[3px] text-[14px] tracking-[0.4px] text-[#222] ${mono}`}>2294.88 mm²</span>
      </div>
      <div className="flex h-[27px] items-center justify-end pr-[1px]">
        <span className="tracking-[0.5px]">周长:</span>
        <span className={`ml-[8px] flex h-[23px] w-[105px] items-center overflow-hidden whitespace-nowrap border border-[#4a5f78] bg-[#f4f1ec] pl-[3px] text-[14px] tracking-[0.4px] text-[#222] ${mono}`}>414.89 mm</span>
      </div>
    </div>
  );
}

function Viewport() {
  return (
    <div className="relative flex-1 overflow-hidden bg-[#fbfdfd]">
      <Model />
      <div className="relative ml-px mt-px flex h-[12px] w-[374px] items-center justify-center border-r border-[#777] bg-gradient-to-b from-[#e4e4e4] to-[#bcbcbc]">
        <Grip />
      </div>
      <Tree />
      <MeasurePopup />
      <div className="absolute left-[791px] top-[397px] flex flex-col items-center text-white">
        <span className={`whitespace-nowrap text-[35px] font-bold leading-[42px] opacity-50 ${cjk}`}>3D世界网</span>
        <span className="mt-[3px] text-[11px] tracking-[2.500px] text-[#eef3f3] font-['Liberation_Sans',sans-serif]">WWW.3DSJW.COM</span>
      </div>
    </div>
  );
}

export default function App() {
  return (
    <div className={`flex h-[796px] w-[1038px] flex-col overflow-hidden bg-white ${cjk}`}>
      <div className="flex h-[74px] shrink-0">
        <Logo />
        <div className="min-w-0 flex-1 overflow-hidden">
          <QuickBar />
          <TabBar />
        </div>
      </div>
      <Ribbon />
      <div className="flex min-h-0 flex-1">
        <LeftRail />
        <div className="flex min-w-0 flex-1 flex-col">
          <div className="flex h-[40px] shrink-0 items-end bg-white pl-[2px]">
            <div className="flex h-[37px] w-[134px] shrink-0 items-center whitespace-nowrap bg-[#25508f] pl-[22px] text-[19px] text-white">
              <svg className="shrink-0" width="21" height="24" viewBox="0 0 21 24">
                <path d="M2 1h13l5 5v17H2z" fill="#eef3f8" stroke="#c8d4e0" />
                <path d="M1 6h8v6h7v7H1z" fill="#3f9fe8" />
              </svg>
              <span className="ml-[3px]">零件1</span>
              <Close className="ml-[18px] h-[18px] w-[18px] shrink-0" strokeWidth={3} />
            </div>
          </div>
          <Toolbar />
          <Viewport />
        </div>
      </div>
    </div>
  );
}
